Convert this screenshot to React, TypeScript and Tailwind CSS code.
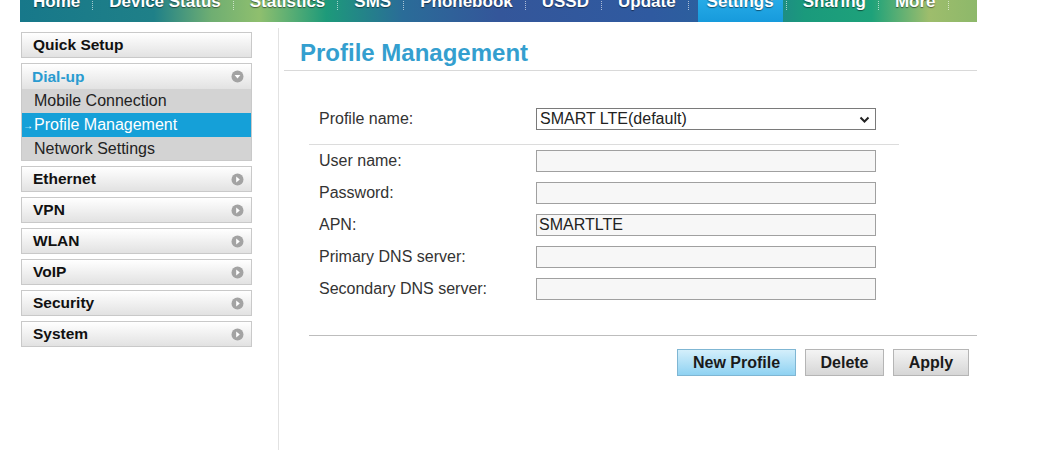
import React from 'react';

const navItems = ['Home', 'Device Status', 'Statistics', 'SMS', 'Phonebook', 'USSD', 'Update', 'Settings', 'Sharing', 'More'];

const menuItems = ['Ethernet', 'VPN', 'WLAN', 'VoIP', 'Security', 'System'];

const fields = [
  { label: 'User name:', value: '' },
  { label: 'Password:', value: '' },
  { label: 'APN:', value: 'SMARTLTE' },
  { label: 'Primary DNS server:', value: '' },
  { label: 'Secondary DNS server:', value: '' },
];

const CircleIcon: React.FC<{ down?: boolean }> = ({ down }) => (
  <svg width="13" height="13" viewBox="0 0 13 13">
    <circle cx="6.5" cy="6.5" r="6" fill="#a3a3a3" />
    {down ? (
      <path d="M3.6 5 L9.4 5 L6.5 8.6 Z" fill="#fff" />
    ) : (
      <path d="M5.2 3.5 L8.8 6.5 L5.2 9.5 Z" fill="#fff" />
    )}
  </svg>
);

const App: React.FC = () => {
  return (
    <div className="w-[1059px] h-[450px] overflow-hidden bg-white font-['Liberation_Sans',Arial,sans-serif] text-[#222]">
      {/* Top navigation, scrolled partly off screen */}
      <div className="ml-[20px] w-[957px] h-[22px] overflow-hidden bg-[linear-gradient(90deg,#17788a_0%,#1f8088_14%,#6fae72_20%,#8fbf6e_25%,#1d9a7a_32%,#2a6c98_40%,#34569a_50%,#2f5aa0_66%,#2c5f9e_71%,#1a9a7c_82%,#1ea27a_89%,#9ebd6c_95%,#8db86a_100%)]">
        <div className="flex h-[22px] items-start -mt-[7px] pl-[13px]">
          {navItems.map((item) => (
            <React.Fragment key={item}>
              {item === 'Settings' ? (
                <div className="ml-[-7px] mr-[-9px] h-[40px] px-[9px] bg-[linear-gradient(180deg,#2bb0ea,#0f92d6)] text-white font-bold text-[17px] leading-[17px] [text-shadow:0_1px_1px_rgba(0,0,0,0.5)]">
                  {item}
                </div>
              ) : (
                <div className="text-white font-bold text-[17px] leading-[17px] [text-shadow:0_1px_1px_rgba(0,0,0,0.5)]">
                  {item}
                </div>
              )}
              <div className="ml-[12px] mr-[16px] mt-[8px] w-[1px] h-[9px] border-l border-dotted border-white/60" />
            </React.Fragment>
          ))}
        </div>
      </div>

      <div className="flex">
        {/* Sidebar */}
        <div className="ml-[21px] w-[231px] mt-[10px] flex flex-col gap-[5px]">
          <div className="h-[26px] border border-[#c9c9c9] bg-[linear-gradient(180deg,#ffffff,#e2e2e2)] flex items-center px-[11px] text-[15.5px] font-bold text-[#111]">
            Quick Setup
          </div>
          <div className="border border-[#c9c9c9]">
            <div className="h-[25px] bg-[linear-gradient(180deg,#ffffff,#e2e2e2)] flex items-center justify-between px-[10px] pr-[7px]">
              <span className="text-[15.5px] font-bold text-[#2a9bd0]">Dial-up</span>
              <CircleIcon down />
            </div>
            <div className="h-[24px] bg-[#d3d3d3] flex items-center pl-[12px] text-[16px] text-[#222]">Mobile Connection</div>
            <div className="h-[24px] bg-[#15a0d8] flex items-center pl-[1px] text-[16px] text-white">
              <span className="text-[10px] mr-[1px]">→</span>Profile Management
            </div>
            <div className="h-[23px] bg-[#d3d3d3] flex items-center pl-[12px] text-[16px] text-[#222]">Network Settings</div>
          </div>
          {menuItems.map((m) => (
            <div
              key={m}
              className="h-[26px] border border-[#c9c9c9] bg-[linear-gradient(180deg,#ffffff,#e2e2e2)] flex items-center justify-between pl-[11px] pr-[7px]"
            >
              <span className="text-[15.5px] font-bold text-[#111]">{m}</span>
              <CircleIcon />
            </div>
          ))}
        </div>

        {/* Main content */}
        <div className="ml-[26px] mt-[6px] h-[430px] border-l border-[#e2e2e2] pl-[5px] w-[699px]">
          <div className="pt-[11px] pb-[3px] border-b border-[#d9d9d9]">
            <h1 className="pl-[16px] text-[24px] leading-[28px] font-bold text-[#349fcf]">Profile Management</h1>
          </div>

          <div className="ml-[25px] w-[590px] mt-[37px] pb-[14px] border-b border-[#dcdcdc]">
            <div className="flex items-center h-[22px]">
              <span className="w-[227px] pl-[10px] text-[16px] text-[#333]">Profile name:</span>
              <div className="relative w-[340px] h-[22px] border border-[#7a7a7a] bg-white flex items-center pl-[3px] text-[16px] text-[#222]">
                SMART LTE(default)
                <svg className="absolute right-[5px] top-[6px]" width="11" height="9" viewBox="0 0 11 9">
                  <path d="M1.5 2.5 L5.5 6.5 L9.5 2.5" fill="none" stroke="#222" strokeWidth="2" />
                </svg>
              </div>
            </div>
          </div>

          <div className="ml-[25px] mt-[5px] flex flex-col gap-[10px]">
            {fields.map((f) => (
              <div key={f.label} className="flex items-center h-[22px]">
                <span className="w-[227px] pl-[10px] text-[16px] text-[#333]">{f.label}</span>
                <div className="w-[340px] h-[22px] border border-[#a0a0a0] bg-[#f7f7f7] flex items-center pl-[2px] text-[16px] text-[#222]">
                  {f.value}
                </div>
              </div>
            ))}
          </div>

          <div className="ml-[25px] mt-[35px] w-[668px] border-t border-[#bdbdbd] pt-[13px] flex justify-end gap-[9px] pr-[8px]">
            <button className="h-[27px] w-[119px] border border-[#7fb6d3] bg-[linear-gradient(180deg,#d4effb,#8fd2f2)] text-[16px] font-bold text-[#1a1a1a]">
              New Profile
            </button>
            <button className="h-[27px] w-[79px] border border-[#b5b5b5] bg-[linear-gradient(180deg,#f4f4f4,#d6d6d6)] text-[16px] font-bold text-[#1a1a1a]">
              Delete
            </button>
            <button className="h-[27px] w-[76px] border border-[#b5b5b5] bg-[linear-gradient(180deg,#f4f4f4,#d6d6d6)] text-[16px] font-bold text-[#1a1a1a]">
              Apply
            </button>
          </div>
        </div>
      </div>
    </div>
  );
};

export default App;
